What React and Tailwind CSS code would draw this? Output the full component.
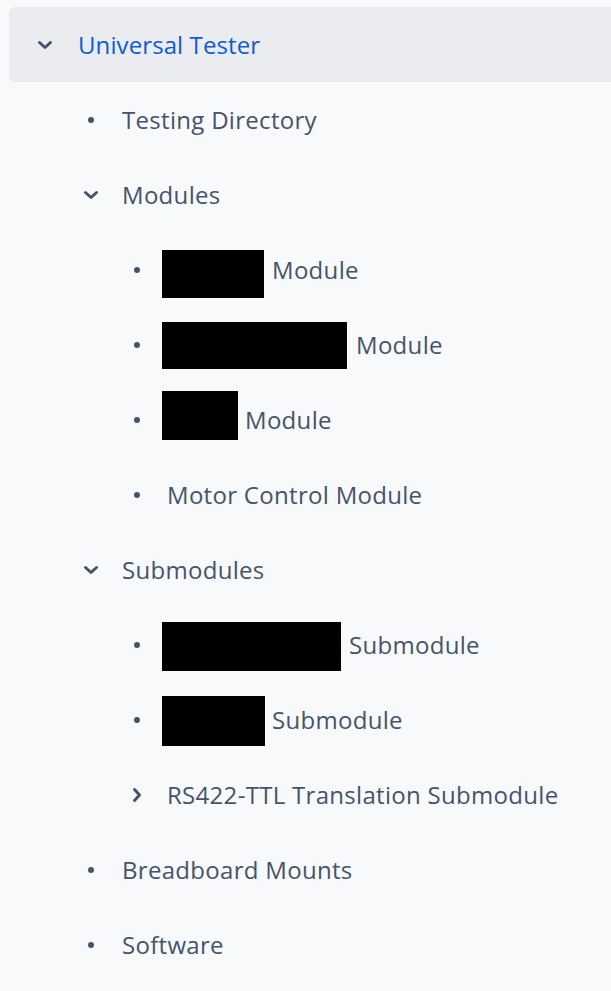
// redact: [width, height, marginTop, gapAfter] for the blacked-out name boxes
const tree = [
  { label: "Testing Directory", level: 1, icon: "bullet" },
  { label: "Modules", level: 1, icon: "down" },
  { label: "Module", level: 2, icon: "bullet", redact: [102, 48, 8, 8] },
  { label: "Module", level: 2, icon: "bullet", redact: [185, 47, 1, 9] },
  { label: "Module", level: 2, icon: "bullet", redact: [76, 49, -9, 7] },
  { label: "Motor Control Module", level: 2, icon: "bullet" },
  { label: "Submodules", level: 1, icon: "down" },
  { label: "Submodule", level: 2, icon: "bullet", redact: [179, 49, 3, 8] },
  { label: "Submodule", level: 2, icon: "bullet", redact: [103, 50, 2, 7] },
  { label: "RS422-TTL Translation Submodule", level: 2, icon: "right" },
  { label: "Breadboard Mounts", level: 1, icon: "bullet" },
  { label: "Software", level: 1, icon: "bullet" },
];

const Chevron = ({ right = false }) => (
  <svg
    width="16"
    height="10"
    viewBox="0 0 16 10"
    className={right ? "rotate-[-90deg]" : ""}
    fill="none"
    stroke="currentColor"
    strokeWidth="3"
    strokeLinecap="round"
    strokeLinejoin="round"
  >
    <path d="M2.5 2.5 L8 7.5 L13.5 2.5" />
  </svg>
);

const NodeIcon = ({ icon }) => (
  <span className="flex h-6 w-6 shrink-0 items-center justify-center text-[#44546f]">
    {icon === "bullet" ? (
      <span className="block h-[6px] w-[6px] rounded-full bg-[#44546f]" />
    ) : (
      <Chevron right={icon === "right"} />
    )}
  </span>
);

const rowPadding = {
  1: "pl-[70px] gap-[19px]",
  2: "pl-[116px] gap-[18px]",
};

const App = () => {
  return (
    <div
      className="min-h-screen bg-[#f8f9fb] pl-[9px] pt-[7px]"
      style={{ fontFamily: '"Open Sans", "Noto Sans", sans-serif' }}
    >
      <div className="flex h-[75px] items-center gap-[21px] rounded-l-[6px] bg-[#ebecf0] pl-[24px]">
        <NodeIcon icon="down" />
        <span className="text-[24px] tracking-[0.1px] text-[#0c5bd8]">
          Universal Tester
        </span>
      </div>

      {tree.map((node, i) => (
        <div
          key={i}
          className={`flex h-[75px] items-center ${rowPadding[node.level]}`}
        >
          <NodeIcon icon={node.icon} />
          <span className="flex items-center text-[24px] tracking-[0.3px] text-[#44546f]">
            {node.redact && (
              <span
                className="ml-[-5px] inline-block bg-black"
                style={{
                  width: node.redact[0],
                  height: node.redact[1],
                  marginTop: node.redact[2],
                  marginRight: node.redact[3],
                }}
              />
            )}
            {node.label}
          </span>
        </div>
      ))}
    </div>
  );
};

export default App;
